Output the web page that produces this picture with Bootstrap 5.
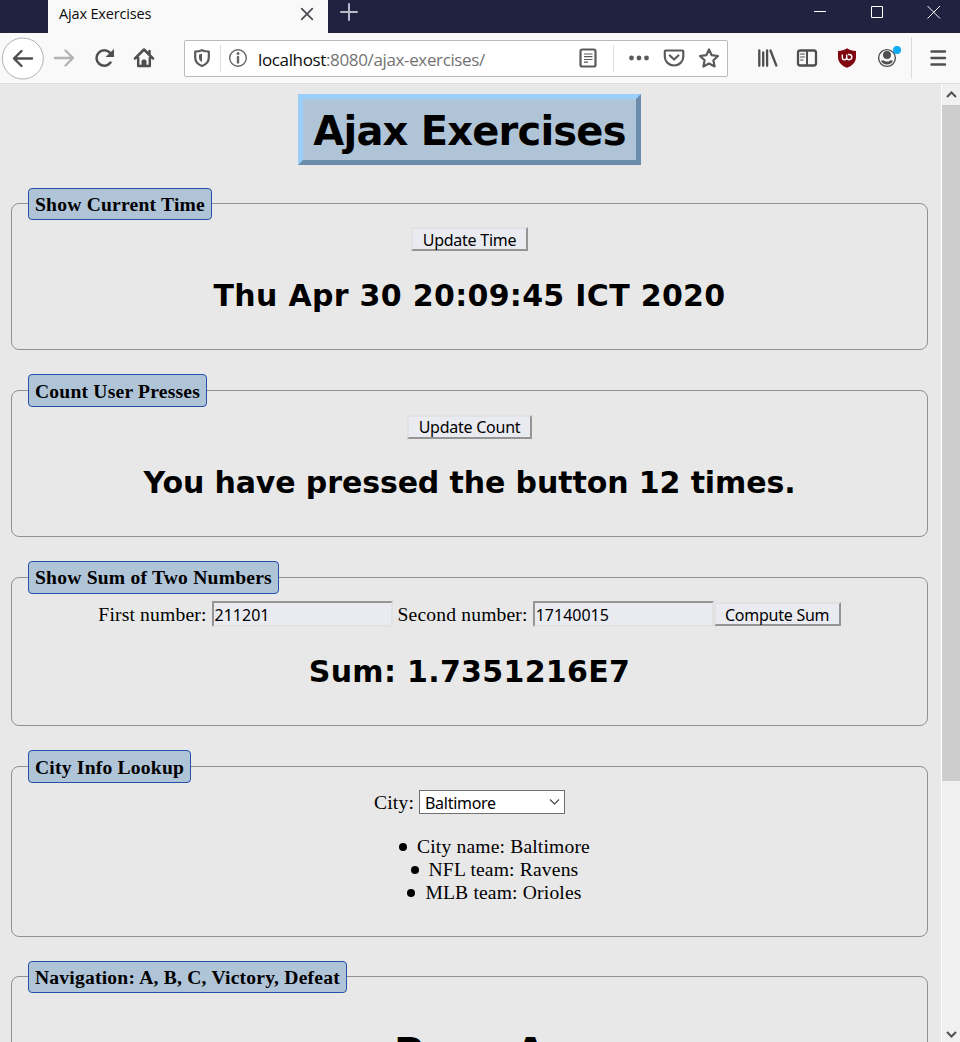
<!DOCTYPE html>
<html lang="en">
<head>
<meta charset="utf-8">
<title>Ajax Exercises</title>
<link href="https://cdn.jsdelivr.net/npm/bootstrap@5.3.0/dist/css/bootstrap.min.css" rel="stylesheet">
<style>
  body { height: 1042px; background: #e8e8e8; color: #000; font-family: "Liberation Serif", serif; font-size: 19.6px; line-height: 23px; letter-spacing: .16px; }
  .ui { font-family: "Open Sans", "Noto Sans", sans-serif; }
  svg { display: block; flex: none; }

  .tabstrip { height: 33px; background: #20223f; }
  .tab-open { width: 280px; margin-left: 48px; height: 33px; padding: 0 14px 6px 11px; background: #f9f9fa; font-size: 14.5px; color: #0c0c0d; }
  .tab-open span { letter-spacing: -.16px; }
  .toolbar { height: 51px; background: #f9f9fa; border-bottom: 1px solid #dcdcdc; }
  .tool { width: 40px; }
  .tool-back { width: 44px; }
  .urlbar { width: 544px; height: 37px; margin-left: 20px; margin-right: 19px; background: #fff; border: 1px solid #b9b9bb; border-radius: 2px; }
  .url { width: 311px; font-size: 17px; color: #737373; letter-spacing: -.36px; white-space: nowrap; padding-top: 2px; }
  .url b { font-weight: 400; color: #0c0c0d; }
  .rule { width: 1px; height: 27px; background: #dddddf; }
  .rule-tall { width: 1px; height: 42px; background: #dcdcde; margin-left: 4px; margin-right: 8px; }

  .viewport { height: 958px; }
  .page { width: 941px; padding: 10px 13px 0 11px; }
  .scroller { width: 19px; background: #f0f0f0; border-left: 1px solid #fff; }
  .thumb { height: 676px; background: #cdcdcd; }

  .title { width: 343px; height: 71px; margin-bottom: 23px; border: 5px solid; border-color: #9bcffb #6b8cac #6b8cac #9bcffb; background: #b0c4d8; font: 700 40px/64px "DejaVu Sans", sans-serif; letter-spacing: -.8px; white-space: nowrap; }
  fieldset { height: 162px; margin-bottom: 24px; border: 1px solid #909090; border-radius: 8px; text-align: center; }
  .count-box { height: 163px; } .sum-box { height: 165px; } .city-box { height: 187px; }
  legend { float: none; width: auto; height: 31.9px; margin: 0 0 7px 16px; padding: 0 6px; border: 1px solid #2151a8; border-radius: 4px; background: #b0c4d8; font-weight: 700; font-size: 19.6px; letter-spacing: .2px; line-height: 32px; text-align: left; white-space: nowrap; }
  .count-box legend, .sum-box legend, .city-box legend { height: 33px; line-height: 32px; }
  .count-box legend { margin-bottom: 8px; line-height: 34px; }
  .city-box legend { line-height: 34px; }
  .result { margin: 25px 0 0; font: 700 30px/40px "DejaVu Sans", sans-serif; letter-spacing: .32px; white-space: nowrap; }
  .count-box .result { margin-top: 24px; letter-spacing: -.11px; }
  .page-name { margin-top: 33px; font-size: 40px; letter-spacing: -.8px; }
  .push { height: 24px; padding: 0; border: 2px solid; border-color: #e2e2e4 #959595 #959595 #e2e2e4; background: #eaebf1; color: #000; font: 16px/20px "Noto Sans", sans-serif; letter-spacing: -.25px; white-space: nowrap; }
  .push-low { padding-top: 1px; line-height: 21px; }
  .entry { width: 181px; height: 26px; padding: 2px 0 0 1px; border: 2px solid; border-color: #959595 #e2e2e4 #e2e2e4 #959595; background: #eaebf1; color: #000; font: 16px/20px "Noto Sans", sans-serif; letter-spacing: 0; border-radius: 0; }
  .field-label { height: 23px; margin: 0 5px 0 0; }
  .entry + .field-label { margin-left: 5px; }
  .pick { width: 146px; height: 24px; padding: 0 4px 0 5px; border: 1px solid #707070; background: #fff; font: 16px/22px "Noto Sans", sans-serif; letter-spacing: -.28px; }
  .pick span { padding-top: 2px; }
  .facts { margin: 21px 0 0; padding-left: 50px; }
  .dot { width: 8px; height: 8px; border-radius: 50%; background: #000; margin: 1px 10px 0 0; }
</style>
</head>
<body class="overflow-hidden">
<header class="ui">
  <div class="tabstrip d-flex">
    <div class="tab-open d-flex align-items-center justify-content-between"><span>Ajax Exercises</span>
      <svg width="14" height="14" fill="none" stroke="#4a4a4f" stroke-width="1.7" stroke-linecap="round"><path d="M1.700 1.700l10.600 10.600M12.300 1.700L1.700 12.300"/></svg>
    </div>
    <svg width="42" height="25" fill="none" stroke="#b9bac8" stroke-width="2" stroke-linecap="round"><path d="M21 4v16M13 12h16"/></svg>
    <svg class="ms-auto" width="150" height="25" fill="none" stroke="#fff"><path d="M4 11.500h12M61.500 6.500h11v11h-11zM117.500 6l12.500 12.500M130 6l-12.500 12.500"/></svg>
  </div>

  <div class="toolbar d-flex align-items-center">
    <div class="tool-back"><svg width="44" height="46" fill="none"><circle cx="22.800" cy="23.500" r="20.500" fill="#fff" stroke="#b1b1b3"/><path d="M32 23.500H14M21.500 16L14 23.500l7.500 7.500" stroke="#4f4f52" stroke-width="2.400" stroke-linecap="round" stroke-linejoin="round"/></svg></div>
    <div class="tool"><svg width="40" height="40" fill="none" stroke="#b3b3b5" stroke-width="2.400" stroke-linecap="round" stroke-linejoin="round"><path d="M11 20h18M21.500 12.500L29 20l-7.500 7.500"/></svg></div>
    <div class="tool"><svg width="40" height="40" fill="none" stroke="#4f4f52" stroke-width="2.500" stroke-linecap="round"><path d="M26.500 24.500a7.700 7.700 0 1 1 -.7-9.800"/><path d="M21.500 19h8.500v-8z" fill="#4f4f52" stroke="none"/></svg></div>
    <div class="tool"><svg width="40" height="40" fill="none" stroke="#4f4f52" stroke-width="2.500" stroke-linecap="round" stroke-linejoin="round"><path d="M11 20.500l9-9 9 9M14.200 20v8h11.600v-8M25.500 13v3"/><path d="M18 28v-5q0-1 1-1h2q1 0 1 1v5z" fill="#4f4f52" stroke-width="1"/></svg></div>

    <div class="urlbar d-flex align-items-center">
      <svg width="35" height="35" fill="none" stroke="#5a5a5d" stroke-width="2.200"><path d="M17 9.200c2.200 1 4.600 1.300 6.800 1.300v6c0 4-2.800 7-6.800 8.500-4-1.500-6.800-4.500-6.800-8.500v-6c2.200 0 4.600-.3 6.800-1.300z" stroke-linejoin="round"/><path d="M17 12.500v8.500c-2-1-3-2.500-3-4.500v-3c1 0 2-.4 3-1z" fill="#5a5a5d" stroke="none"/></svg>
      <div class="rule"></div>
      <svg width="37" height="35" fill="none" stroke="#67676a"><circle cx="17" cy="17" r="8.300" stroke-width="1.400"/><path d="M17 16v5.500" stroke-width="2.400" stroke-linecap="round"/><circle cx="17" cy="12.500" r="1.500" fill="#67676a" stroke="none"/></svg>
      <div class="url"><b>localhost</b>:8080/ajax-exercises/</div>
      <svg width="44" height="35" fill="none" stroke="#5a5a5d"><rect x="11.500" y="8.500" width="15" height="17" rx="1.800" stroke-width="2.200"/><path d="M15 13h8.500M15 15.700h8.500M15 18.500h8.500M15 21.200h4" stroke-width="1.200"/></svg>
      <div class="rule"></div>
      <svg width="42" height="35" fill="#5a5a5d"><circle cx="17.500" cy="17" r="2.400"/><circle cx="25" cy="17" r="2.400"/><circle cx="32.500" cy="17" r="2.400"/></svg>
      <svg width="36" height="35" fill="none" stroke="#5a5a5d" stroke-width="2.200" stroke-linecap="round" stroke-linejoin="round"><path d="M9.800 9.500h16.500q1 0 1 1v5c0 5-4 9-9.200 9s-9.300-4-9.300-9v-5q0-1 1-1z"/><path d="M13.800 14.500l4.300 4 4.300-4"/></svg>
      <svg width="33" height="35" fill="none" stroke="#5a5a5d" stroke-width="2.200" stroke-linejoin="round"><path d="M17 8.500l2.700 5.700 6.300.8-4.600 4.300 1.200 6.200-5.600-3-5.600 3 1.200-6.200L8 15l6.300-.8z"/></svg>
    </div>

    <div class="tool"><svg width="40" height="40" fill="none" stroke="#4f4f52" stroke-width="2.300" stroke-linecap="round"><path d="M12.300 12.300v15.500M16.200 14.300v13.500M20.100 12.300v15.500M23.500 12.500l5.800 15"/></svg></div>
    <div class="tool"><svg width="40" height="40" fill="none" stroke="#4f4f52"><rect x="11" y="12.500" width="18" height="15" rx="2.200" stroke-width="2.300"/><path d="M20 12.500v15" stroke-width="2"/><path d="M13.500 16h4M13.500 19h4M13.500 22h2.500" stroke-width="1.200" stroke-linecap="round"/></svg></div>
    <div class="tool"><svg width="40" height="40"><path d="M20 10.200c2.600 1.900 5.700 2.700 9 2.700v6c0 5-3.500 8.700-9 10.900-5.500-2.200-9-5.900-9-10.900v-6c3.300 0 6.400-.8 9-2.700z" fill="#800610"/><path d="M15.300 16.500v3q0 2.200 2.200 2.200t2.200-2.200v-3M19.700 19.500q0 2.200 2.500 2.200a2.600 2.600 0 0 0 0-5.200h-1.200" fill="none" stroke="#fff" stroke-width="1.400"/></svg></div>
    <div class="tool"><svg width="40" height="40" fill="none"><circle cx="20" cy="20" r="8.400" stroke="#4f4f52" stroke-width="1.400"/><circle cx="20" cy="17" r="4" fill="#4f4f52"/><path d="M14 22.700q2.500-.8 3.500.2 2.500 1.200 5 0 1-1 3.500-.2-1.700 3.800-6 3.800t-6-3.800z" fill="#4f4f52"/><circle cx="30" cy="12" r="4" fill="#0fabf5"/></svg></div>
    <div class="rule-tall"></div>
    <svg width="36" height="40" fill="none" stroke="#4f4f52" stroke-width="2.400" stroke-linecap="round"><path d="M11.500 13.500h13.500M11.500 20h13.500M11.500 26.500h13.500"/></svg>
  </div>
</header>

<div class="viewport d-flex overflow-hidden">
  <main class="page">
    <h1 class="title mx-auto d-flex justify-content-center align-items-start"><span>Ajax Exercises</span></h1>

    <fieldset>
      <legend>Show Current Time</legend>
      <div class="d-flex justify-content-center"><button class="push push-low" style="width:117px">Update Time</button></div>
      <h2 class="result">Thu Apr 30 20:09:45 ICT 2020</h2>
    </fieldset>

    <fieldset class="count-box">
      <legend>Count User Presses</legend>
      <div class="d-flex justify-content-center"><button class="push" style="width:125px">Update Count</button></div>
      <h2 class="result">You have pressed the button 12 times.</h2>
    </fieldset>

    <fieldset class="sum-box">
      <legend>Show Sum of Two Numbers</legend>
      <div class="d-flex justify-content-center align-items-center">
        <label class="field-label" for="n1">First number:</label><input class="entry" id="n1" value="211201">
        <label class="field-label" for="n2">Second number:</label><input class="entry" id="n2" value="17140015"><button class="push push-low" style="width:127px">Compute Sum</button>
      </div>
      <h2 class="result">Sum: 1.7351216E7</h2>
    </fieldset>

    <fieldset class="city-box">
      <legend>City Info Lookup</legend>
      <div class="d-flex justify-content-center align-items-center">
        <span class="field-label">City:</span>
        <div class="pick d-flex align-items-center justify-content-between"><span>Baltimore</span>
          <svg width="11" height="8" fill="none" stroke="#444" stroke-width="1.100"><path d="M1 1.500l4.500 4.500L10 1.500"/></svg></div>
      </div>
      <ul class="facts">
        <li class="d-flex justify-content-center align-items-center"><i class="dot"></i>City name: Baltimore</li>
        <li class="d-flex justify-content-center align-items-center"><i class="dot"></i>NFL team: Ravens</li>
        <li class="d-flex justify-content-center align-items-center"><i class="dot"></i>MLB team: Orioles</li>
      </ul>
    </fieldset>

    <fieldset>
      <legend>Navigation: A, B, C, Victory, Defeat</legend>
      <h2 class="result page-name">Page A</h2>
    </fieldset>
  </main>
  <aside class="scroller d-flex flex-column">
    <svg width="18" height="21" fill="none" stroke="#505050" stroke-width="2"><path d="M5 13l4.500-4.500L14 13"/></svg>
    <div class="thumb"></div>
    <svg class="mt-auto" width="18" height="18" fill="none" stroke="#505050" stroke-width="2"><path d="M5 8l4.500 4.500L14 8"/></svg>
  </aside>
</div>
<script src="https://cdn.jsdelivr.net/npm/bootstrap@5.3.0/dist/js/bootstrap.bundle.min.js"></script>
</body>
</html>
